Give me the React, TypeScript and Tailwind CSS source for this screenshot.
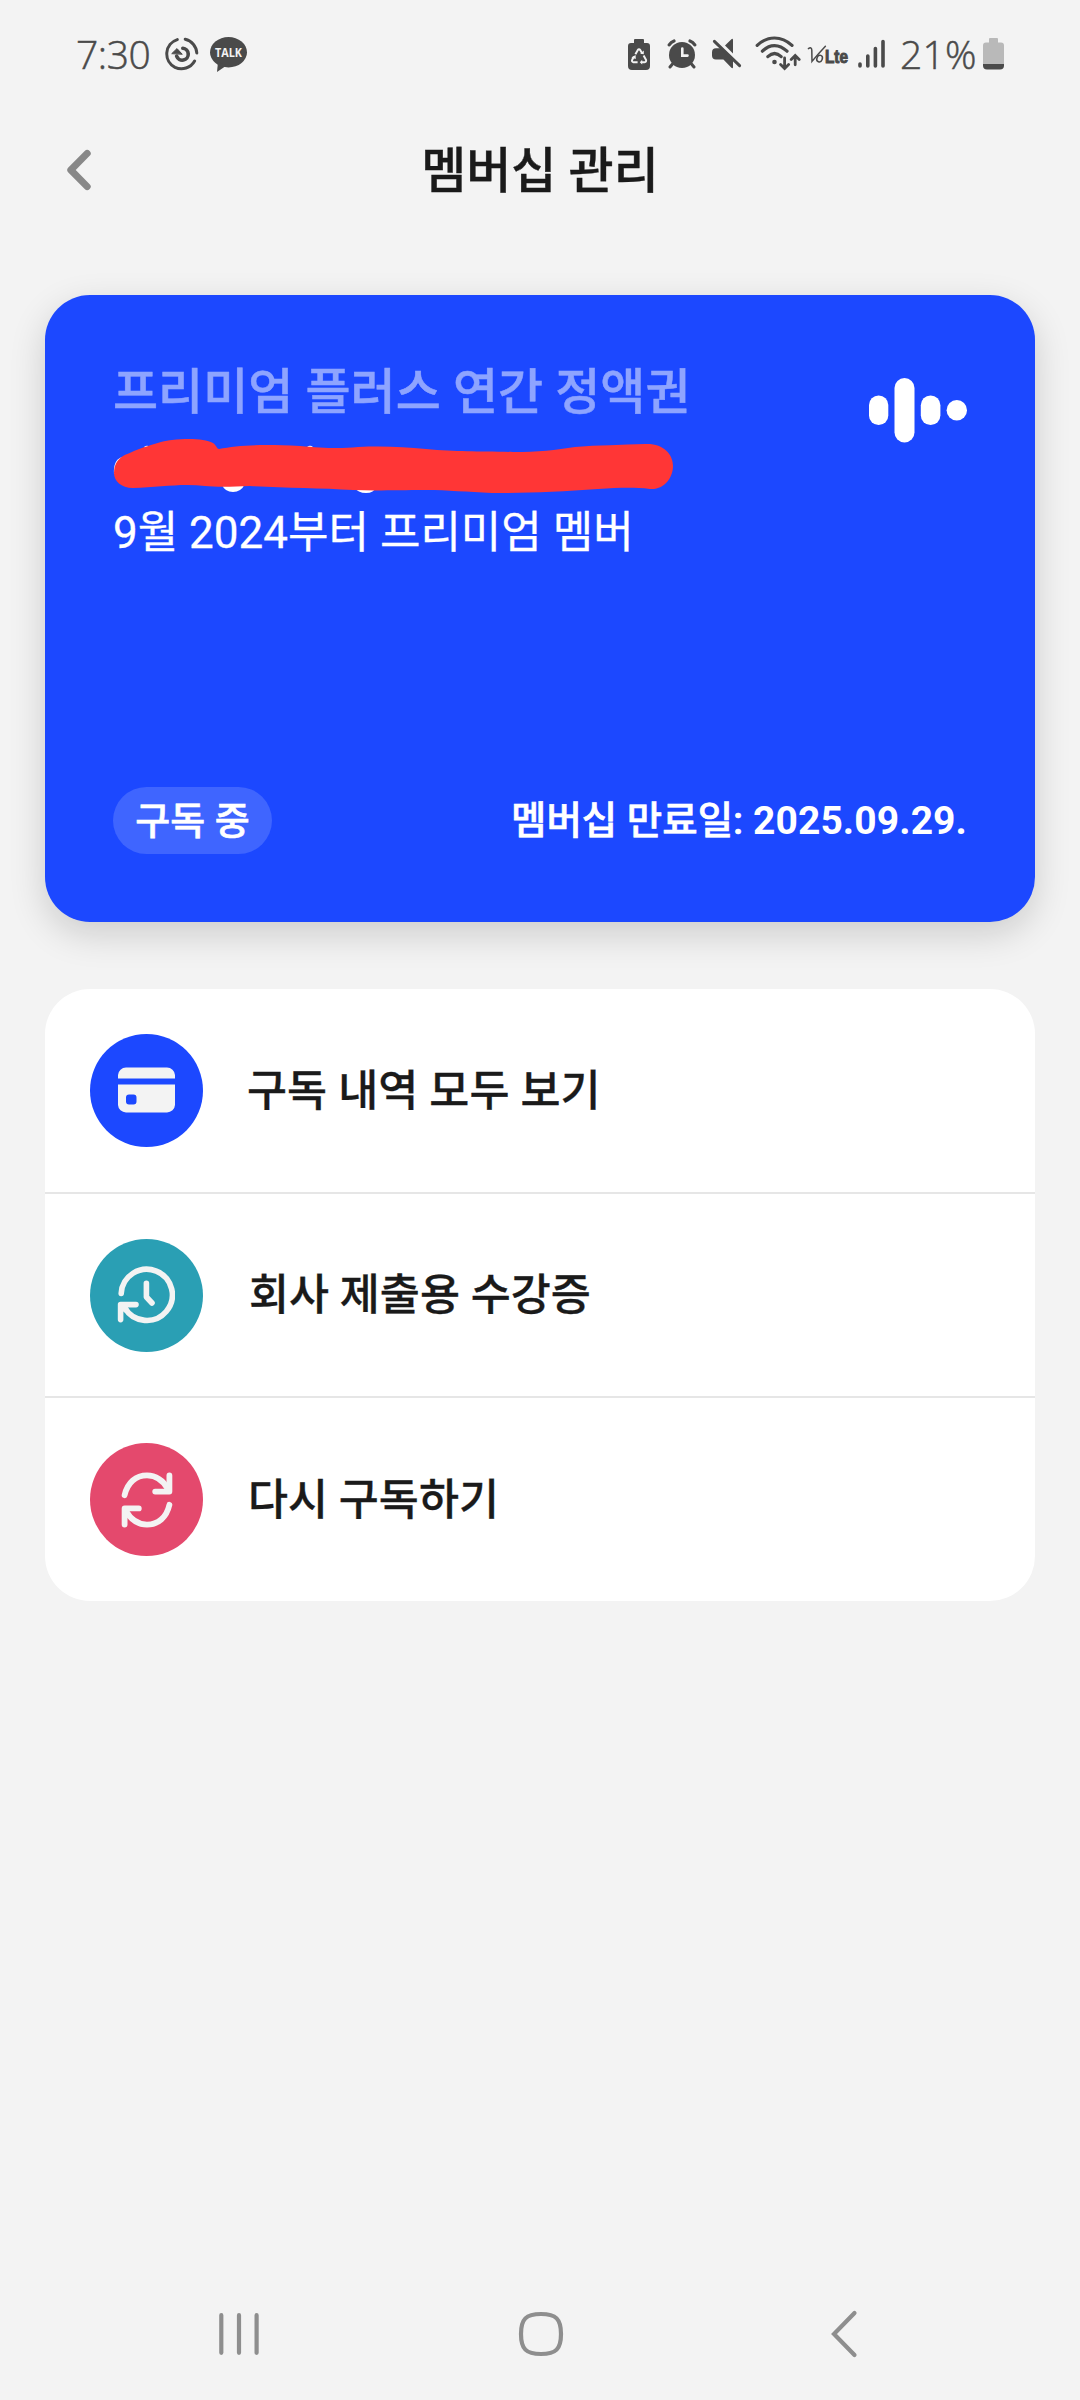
import React from 'react';

const INK = '#4a4a4a';

function ReloadStatusIcon() {
  return (
    <svg width="34" height="34" viewBox="0 0 34 34" fill="none" stroke={INK} strokeWidth="3" strokeLinecap="round">
      <path d="M12.3 2.6A15 15 0 0 0 10 30.3A15 15 0 0 0 29.6 24" />
      <path d="M20.2 2.2A15 15 0 0 1 31.8 16" />
      <path d="M17.8 11.2A6 6 0 1 1 11.6 19.2" strokeWidth="3.6" />
      <path d="M7 16.4L12 11.6L17 17Z" fill={INK} strokeWidth="1" />
    </svg>
  );
}

function TalkIcon() {
  return (
    <svg width="38" height="36" viewBox="0 0 38 36">
      <ellipse cx="18.5" cy="15.3" rx="18.5" ry="15.2" fill={INK} />
      <path d="M8 25L7 35L16.5 28.5Z" fill={INK} />
      <text x="18.5" y="20" textAnchor="middle" fontFamily="Open Sans" fontWeight="700" fontSize="13" textLength="27" lengthAdjust="spacingAndGlyphs" fill="#f3f3f3">TALK</text>
    </svg>
  );
}

function RecycleBatteryIcon() {
  return (
    <svg width="22" height="31" viewBox="0 0 22 31">
      <path d="M7 0h8a1 1 0 0 1 1 1v3h3a3 3 0 0 1 3 3v20a4 4 0 0 1-4 4H4a4 4 0 0 1-4-4V7a3 3 0 0 1 3-3h3V1a1 1 0 0 1 1-1z" fill={INK} />
      <g fill="none" stroke="#f3f3f3" strokeWidth="2">
        <path d="M7.4 15.2L9.7 11.2Q11 9.4 12.3 11.2L14 14" />
        <path d="M15.6 16.6L18 20.8Q18.6 23 16.6 23.2H13.5" />
        <path d="M9.6 23.2H5.4Q3.4 22.8 4.2 20.8L6 17.6" />
      </g>
      <path d="M12.2 14.8L15.8 15.2L15.8 11.6ZM14.2 20.8L11.8 23.2L14.2 25.6ZM3.4 18.4L7.6 16L7.8 20Z" fill="#f3f3f3" />
    </svg>
  );
}

function AlarmIcon() {
  return (
    <svg width="30" height="30" viewBox="0 0 30 30" fill="none" stroke={INK} strokeLinecap="round">
      <circle cx="15" cy="16" r="13" fill={INK} stroke="none" />
      <path d="M2.2 5.8Q4 3 7 2M27.8 5.8Q26 3 23 2" strokeWidth="3.2" />
      <path d="M5.5 25L3 28M24.5 25L27 28" strokeWidth="3" />
      <path d="M15.3 9.5V16.6H20.5" stroke="#f3f3f3" strokeWidth="2.6" />
    </svg>
  );
}

function MuteIcon() {
  return (
    <svg width="31" height="31" viewBox="0 0 31 31">
      <path d="M14 7.6L20.4 1.2Q22 0.2 22 2.2V15.6ZM10 10.2L22 22.2V29Q22 31 20.4 29.8L12.4 21.4H5Q1 21.4 1 17.4V14.2Q1 10.2 5 10.2Z" fill={INK} />
      <path d="M3.4 3.4L28.6 27.6" stroke={INK} strokeWidth="3" strokeLinecap="round" />
    </svg>
  );
}

function WifiIcon() {
  return (
    <svg width="46" height="35" viewBox="0 0 46 35" fill="none" stroke={INK} strokeWidth="3.2" strokeLinecap="round">
      <path d="M2.2 9.4Q10 2 19.5 2T37 9.4" />
      <path d="M7.4 15.2Q13 9.6 19.5 9.6T32 15.2" />
      <path d="M12.8 20.6Q19.6 14.4 26.2 20.6" />
      <circle cx="19.5" cy="26" r="2.3" fill={INK} stroke="none" />
      <path d="M29.6 22V31.6M25.6 28.4L29.6 32.4L33.6 28.4M40.2 28.8V20M36.2 23.4L40.2 19.4L44.2 23.4" strokeWidth="2.8" />
    </svg>
  );
}

function VolteIcon() {
  return (
    <svg className="overflow-visible" width="43" height="26" viewBox="0 0 43 26">
      <g fill="none" stroke={INK} strokeWidth="1.5" strokeLinecap="round">
        <path d="M1.4 3.6Q4.6 1.6 4.8 5L5 16.4Q11 9 18.4 1.2" />
        <ellipse cx="12.6" cy="13.6" rx="2.7" ry="3.4" transform="rotate(20 12.6 13.6)" />
      </g>
      <text x="18" y="17.6" fontFamily="Liberation Sans" fontWeight="700" fontSize="17.5" textLength="23" lengthAdjust="spacingAndGlyphs" fill={INK} stroke={INK} strokeWidth="1">Lte</text>
    </svg>
  );
}

function SignalIcon() {
  return (
    <svg width="28" height="30" viewBox="0 0 28 30" stroke={INK} strokeWidth="3.6" strokeLinecap="round">
      <path d="M2 25V27M9.8 17V27M17.4 9.6V27M25 2.6V27" />
    </svg>
  );
}

function BatteryIcon() {
  return (
    <svg width="21" height="32" viewBox="0 0 21 32">
      <path d="M7 0h7a1 1 0 0 1 1 1v3.4h3a3 3 0 0 1 3 3V26H0V7.4a3 3 0 0 1 3-3h3V1a1 1 0 0 1 1-1z" fill="#b9b9b9" />
      <path d="M0 26H21V27.5A4 4 0 0 1 17 31.5H4A4 4 0 0 1 0 27.5Z" fill={INK} />
    </svg>
  );
}

function StatusBar() {
  return (
    <div className="flex h-[110px] items-start justify-between px-[76px] pt-[36px] font-['Open_Sans',sans-serif] text-[39px] font-light leading-[36px] text-[#4a4a4a]">
      <div className="flex items-start">
        <span className="w-[89px] tracking-[-0.4px] [-webkit-text-stroke:0.5px_#4a4a4a]">7:30</span>
        <span className="mt-[1px]"><ReloadStatusIcon /></span>
        <span className="ml-[11px] mt-[1px]"><TalkIcon /></span>
      </div>
      <div className="flex items-start">
        <span className="mt-[3px]"><RecycleBatteryIcon /></span>
        <span className="ml-[17px] mt-[3px]"><AlarmIcon /></span>
        <span className="ml-[14px] mt-[2px]"><MuteIcon /></span>
        <span className="ml-[13px]"><WifiIcon /></span>
        <span className="ml-[6px] mt-[9px]"><VolteIcon /></span>
        <span className="ml-[8px] mt-[3px]"><SignalIcon /></span>
        <span className="ml-[14px] w-[83px] whitespace-nowrap tracking-[0.2px] [-webkit-text-stroke:0.5px_#4a4a4a]">21%</span>
        <span className="mt-[2px]"><BatteryIcon /></span>
      </div>
    </div>
  );
}

function Header() {
  return (
    <header className="grid h-[120px] grid-cols-[1fr_auto_1fr] items-center">
      <button className="pl-[66px]" aria-label="뒤로">
        <svg width="26" height="42" viewBox="0 0 26 42" fill="none" stroke="#888888" strokeWidth="7" strokeLinecap="round" strokeLinejoin="round">
          <path d="M21.2 4.4L4.8 21L21.2 37.6" />
        </svg>
      </button>
      <h1 className="pt-[3px] text-[49px] font-medium leading-[60px] [-webkit-text-stroke:0.4px_#1a1a1a]">멤버십 관리</h1>
    </header>
  );
}

function VoiceLogo() {
  return (
    <svg className="-mr-px mt-[21px]" width="99" height="65" viewBox="0 0 99 65" fill="#fff">
      <rect x="0" y="17.5" width="19.3" height="29.5" rx="9.6" />
      <rect x="25.5" y="0" width="20" height="64.5" rx="10" />
      <rect x="51.8" y="17.5" width="19.6" height="29.5" rx="9.8" />
      <circle cx="87.8" cy="32.2" r="10.2" />
    </svg>
  );
}

/** Account name hidden behind a marker stroke. */
function RedactedName() {
  return (
    <svg className="mt-[9px] block" width="562" height="56" viewBox="0 0 562 56">
      <g fill="#fff">
        <path d="M1 36Q0 22 9 19L14 30Z" />
        <circle cx="34" cy="11" r="3.2" />
        <circle cx="197" cy="11" r="3.2" />
        <path d="M248 12Q254 7 262 10V16H248Z" />
        <path d="M109 47Q112 54 120 54T132 46Z" />
        <path d="M241 49Q245 55 253 55T263 49Z" />
      </g>
      <path d="M1 35C1 27 4 22 10 18C22 12 47 3 59 2C77 0 92 1 100 5C104 8 104 11 106 11C125 7 150 6 187 8C210 10 226 11 245 9C272 8 291 9 313 11C345 14 365 13 400 14C425 14 443 12 462 9C485 7 509 7 532 6C550 5 560 16 560 28C560 39 552 52 537 51C519 49 505 50 485 51C448 54 410 55 379 55C354 54 335 52 313 52C284 52 263 53 240 52C208 50 170 50 137 48C118 49 101 49 92 48C70 45 47 49 20 50C8 50 1 43 1 35Z" fill="#ff3636" />
    </svg>
  );
}

function MembershipCard() {
  return (
    <section className="mx-[45px] mt-[65px] flex h-[627px] flex-col justify-between rounded-[45px] bg-[#1c48ff] px-[68px] pb-[68px] pt-[62px] text-white shadow-[0_12px_36px_rgba(0,0,0,0.16)]">
      <div className="flex items-start justify-between">
        <div className="whitespace-nowrap">
          <p className="text-[49px] font-medium leading-[72px] text-[#8ea4ff] [-webkit-text-stroke:0.5px_#8ea4ff]">프리미엄 플러스 연간 정액권</p>
          <RedactedName />
          <p className="mt-[7px] text-[44px] leading-[64px] [-webkit-text-stroke:0.3px_white]">9월 2024부터 프리미엄 멤버</p>
        </div>
        <VoiceLogo />
      </div>
      <div className="flex items-center justify-between whitespace-nowrap text-[39px] font-bold">
        <span className="flex h-[67px] w-[159px] items-center justify-center rounded-full bg-[#3f65ff] pt-[1px] text-[38px] font-medium [-webkit-text-stroke:0.6px_white]">구독 중</span>
        <span className="pt-[2px]"><span className="text-[38.5px] font-medium [-webkit-text-stroke:0.6px_white]">멤버십 만료일:</span> <span className="tracking-[0.1px]">2025.09.29.</span></span>
      </div>
    </section>
  );
}

function CardIcon() {
  return (
    <svg className="-mt-[2px]" width="57" height="46" viewBox="0 0 57 46" fill="#f3f3f3">
      <path d="M0 11.5V8A8 8 0 0 1 8 0.5H49A8 8 0 0 1 57 8V11.5Z" />
      <path fillRule="evenodd" d="M0 17.5H57V38A8 8 0 0 1 49 45.5H8A8 8 0 0 1 0 38ZM11 27.5A3 3 0 0 0 8 30.5V34.5A3 3 0 0 0 11 37.5H15.5A3 3 0 0 0 18.5 34.5V30.5A3 3 0 0 0 15.5 27.5Z" />
    </svg>
  );
}

function HistoryIcon() {
  return (
    <svg className="-ml-px" width="58" height="58" viewBox="0 0 58 58" fill="none" stroke="#f3f3f3" strokeWidth="5.6" strokeLinecap="round" strokeLinejoin="round">
      <path d="M4.2 27.4A25.6 25.6 0 1 1 7.8 42" />
      <path d="M19 38.6H3.6V53.6M4.6 39.6L9 44" />
      <path d="M29.4 17.2V31L35 37" />
    </svg>
  );
}

function RenewIcon() {
  return (
    <svg width="58" height="58" viewBox="0 0 58 58" fill="none" stroke="#f3f3f3" strokeWidth="5.8" strokeLinecap="round" strokeLinejoin="round">
      <path d="M6.6 24.2C9.5 11.5 18 4.4 29 4.4C38 4.4 45.5 10 50.4 18.5" />
      <path d="M51.4 4.4V20.6H37.2" />
      <path d="M51.4 33.8C48.5 46.5 40 53.6 29 53.6C20 53.6 12.5 48 7.6 39.5" />
      <path d="M6.6 53.6V37.4H20.8" />
    </svg>
  );
}

const rows = [
  { label: '구독 내역 모두 보기', circle: 'bg-[#1c48ff]', text: 'ml-[44px] tracking-[0.1px]', icon: <CardIcon />, box: 'h-[205px] border-b-2' },
  { label: '회사 제출용 수강증', circle: 'bg-[#2a9fb4]', text: 'ml-[46px]', icon: <HistoryIcon />, box: 'h-[204px] border-b-2' },
  { label: '다시 구독하기', circle: 'bg-[#e4496d]', text: 'ml-[45px]', icon: <RenewIcon />, box: 'h-[203px]' },
];

function Menu() {
  return (
    <ul className="mx-[45px] mt-[67px] overflow-hidden rounded-[45px] bg-white">
      {rows.map((row) => (
        <li key={row.label} className={`flex items-center border-[#e6e6e6] pl-[45px] ${row.box}`}>
          <span className={`flex size-[113px] items-center justify-center rounded-full ${row.circle}`}>{row.icon}</span>
          <span className={`pt-[2px] text-[43.5px] font-medium leading-[64px] [-webkit-text-stroke:0.3px_#1a1a1a] ${row.text}`}>{row.label}</span>
        </li>
      ))}
    </ul>
  );
}

function NavigationBar() {
  return (
    <nav className="mt-auto flex h-[132px] items-center justify-between pl-[218px] pr-[222px]">
      <svg width="42" height="44" viewBox="0 0 42 44" stroke="#8e8e8e" strokeWidth="4.2" strokeLinecap="round">
        <path d="M3.3 3.2V40.8M21 3.2V40.8M38.6 3.2V40.8" />
      </svg>
      <svg className="mr-[8px]" width="46" height="46" viewBox="0 0 46 46" fill="none" stroke="#8e8e8e" strokeWidth="4.2">
        <path d="M23 3C38 3 43 8 43 23S38 43 23 43S3 38 3 23S8 3 23 3Z" />
      </svg>
      <svg width="28" height="48" viewBox="0 0 28 48" fill="none" stroke="#8e8e8e" strokeWidth="4.2" strokeLinecap="round">
        <path d="M24.5 3L4 24L24.5 45" />
      </svg>
    </nav>
  );
}

export default function App() {
  return (
    <main className="flex h-[2400px] w-[1080px] flex-col bg-[#f3f3f3] font-[Roboto,'Noto_Sans_CJK_KR',sans-serif] text-[#1a1a1a]">
      <StatusBar />
      <Header />
      <MembershipCard />
      <Menu />
      <NavigationBar />
    </main>
  );
}
